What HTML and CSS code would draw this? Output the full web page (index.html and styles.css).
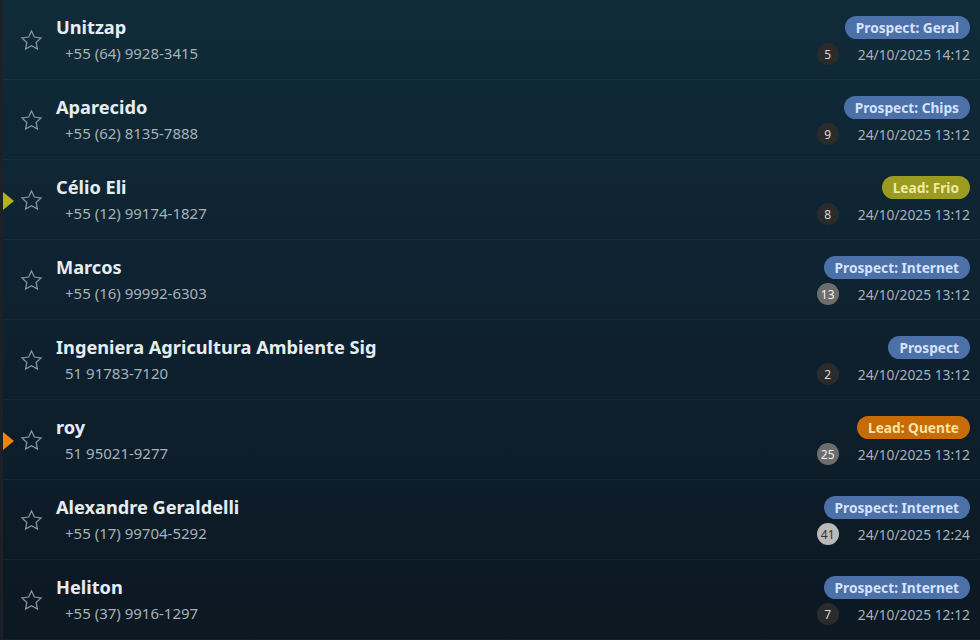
FILE: index.html
```html
<!DOCTYPE html>
<html lang="pt-BR">
<head>
<meta charset="utf-8">
<title>Contatos</title>
<link rel="stylesheet" href="styles.css">
</head>
<body>
<svg width="0" height="0" style="position:absolute">
  <defs>
    <symbol id="star" viewBox="0 0 24 24">
      <path d="M12 2.8l2.75 5.85 6.4.8-4.7 4.42 1.2 6.33L12 17.08 6.35 20.2l1.2-6.33-4.7-4.42 6.4-.8z" fill="none" stroke="currentColor" stroke-width="1.2" stroke-linejoin="miter"/>
    </symbol>
  </defs>
</svg>
<div class="list">
  <div class="row">
    <div class="mark"></div>
    <svg class="star"><use href="#star"/></svg>
    <div class="main"><div class="name">Unitzap</div><div class="phone">+55 (64) 9928-3415</div></div>
    <div class="side"><span class="tag tag-prospect">Prospect: Geral</span><div class="meta"><span class="count c-dark">5</span><span class="date">24/10/2025 14:12</span></div></div>
  </div>
  <div class="row">
    <div class="mark"></div>
    <svg class="star"><use href="#star"/></svg>
    <div class="main"><div class="name">Aparecido</div><div class="phone">+55 (62) 8135-7888</div></div>
    <div class="side"><span class="tag tag-prospect">Prospect: Chips</span><div class="meta"><span class="count c-dark">9</span><span class="date">24/10/2025 13:12</span></div></div>
  </div>
  <div class="row">
    <div class="mark"><span class="tri tri-frio"></span></div>
    <svg class="star"><use href="#star"/></svg>
    <div class="main"><div class="name">Célio Eli</div><div class="phone">+55 (12) 99174-1827</div></div>
    <div class="side"><span class="tag tag-frio">Lead: Frio</span><div class="meta"><span class="count c-dark">8</span><span class="date">24/10/2025 13:12</span></div></div>
  </div>
  <div class="row">
    <div class="mark"></div>
    <svg class="star"><use href="#star"/></svg>
    <div class="main"><div class="name">Marcos</div><div class="phone">+55 (16) 99992-6303</div></div>
    <div class="side"><span class="tag tag-prospect">Prospect: Internet</span><div class="meta"><span class="count c-mid">13</span><span class="date">24/10/2025 13:12</span></div></div>
  </div>
  <div class="row">
    <div class="mark"></div>
    <svg class="star"><use href="#star"/></svg>
    <div class="main"><div class="name">Ingeniera Agricultura Ambiente Sig</div><div class="phone">51 91783-7120</div></div>
    <div class="side"><span class="tag tag-prospect">Prospect</span><div class="meta"><span class="count c-dark">2</span><span class="date">24/10/2025 13:12</span></div></div>
  </div>
  <div class="row">
    <div class="mark"><span class="tri tri-quente"></span></div>
    <svg class="star"><use href="#star"/></svg>
    <div class="main"><div class="name">roy</div><div class="phone">51 95021-9277</div></div>
    <div class="side"><span class="tag tag-quente">Lead: Quente</span><div class="meta"><span class="count c-mid">25</span><span class="date">24/10/2025 13:12</span></div></div>
  </div>
  <div class="row">
    <div class="mark"></div>
    <svg class="star"><use href="#star"/></svg>
    <div class="main"><div class="name">Alexandre Geraldelli</div><div class="phone">+55 (17) 99704-5292</div></div>
    <div class="side"><span class="tag tag-prospect">Prospect: Internet</span><div class="meta"><span class="count c-light">41</span><span class="date">24/10/2025 12:24</span></div></div>
  </div>
  <div class="row">
    <div class="mark"></div>
    <svg class="star"><use href="#star"/></svg>
    <div class="main"><div class="name">Heliton</div><div class="phone">+55 (37) 9916-1297</div></div>
    <div class="side"><span class="tag tag-prospect">Prospect: Internet</span><div class="meta"><span class="count c-dark">7</span><span class="date">24/10/2025 12:12</span></div></div>
  </div>
</div>
</body>
</html>
```
FILE: styles.css
```css
* { box-sizing: border-box; }
html, body { margin: 0; padding: 0; }
body {
  width: 980px;
  height: 640px;
  overflow: hidden;
  font-family: "Noto Sans", "Open Sans", sans-serif;
  background: #0c1820;
}
.list {
  height: 640px;
  border-left: 3px solid #1b2127;
  background: linear-gradient(to bottom, #102b38 0%, #0e2230 45%, #0c1822 100%);
}
.row {
  height: 80px;
  display: flex;
  align-items: center;
  border-bottom: 1px solid rgba(255, 255, 255, 0.035);
}
.mark {
  width: 16px;
  height: 20px;
  display: flex;
  align-items: center;
  margin-top: 2px;
}
.tri {
  width: 0;
  height: 0;
  border-top: 9px solid transparent;
  border-bottom: 9px solid transparent;
  border-left: 11px solid #b3b320;
}
.tri-quente { border-left-color: #ee8410; }
.star {
  width: 25px;
  height: 25px;
  color: #8795a0;
  margin-right: 12px;
  margin-top: 2px;
  flex-shrink: 0;
}
.main {
  flex: 1;
  display: flex;
  flex-direction: column;
  gap: 5px;
  min-width: 0;
}
.name {
  font-size: 18.2px;
  font-weight: 700;
  line-height: 22px;
  color: #e6edf1;
  white-space: nowrap;
}
.phone {
  font-size: 15px;
  line-height: 20px;
  color: #a6b2ba;
  padding-left: 9px;
}
.side {
  display: flex;
  flex-direction: column;
  align-items: flex-end;
  gap: 4px;
  padding-right: 10px;
  padding-top: 2px;
}
.tag {
  height: 23px;
  line-height: 23px;
  padding: 0 11px;
  border-radius: 12px;
  font-size: 13.7px;
  font-weight: 700;
}
.tag-prospect { background: #4c70a8; color: #d6e2fb; }
.tag-frio { background: #9b9b1f; color: #f2eaa4; }
.tag-quente { background: #c76b04; color: #fde3a8; }
.meta {
  display: flex;
  align-items: center;
  height: 22px;
}
.count {
  width: 22px;
  height: 22px;
  border-radius: 50%;
  display: flex;
  align-items: center;
  justify-content: center;
  font-size: 12px;
  margin-right: 19px;
}
.c-dark { background: #2b2b2b; color: #d9d9d9; }
.c-mid { background: #6d6d6d; color: #f2f2f2; }
.c-light { background: #b9b9b9; color: #333; }
.date {
  font-size: 13.8px;
  color: #a6b2ba;
}
```
